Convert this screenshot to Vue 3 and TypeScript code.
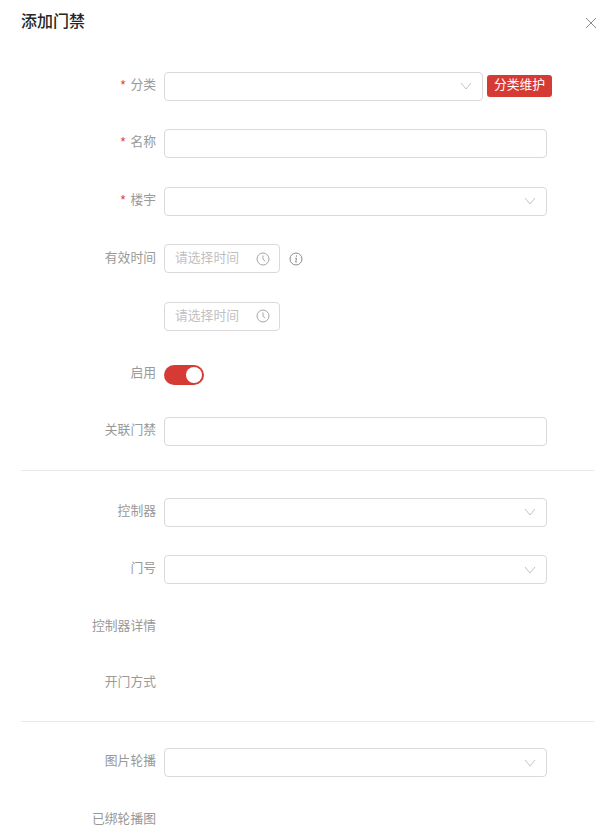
<script setup lang="ts">
const sections = [
  [
    { label: '分类', required: true, type: 'select', extra: true },
    { label: '名称', required: true, type: 'input' },
    { label: '楼宇', required: true, type: 'select' },
    { label: '有效时间', type: 'time', info: true },
    { label: '', type: 'time' },
    { label: '启用', type: 'switch' },
    { label: '关联门禁', type: 'input' },
  ],
  [
    { label: '控制器', type: 'select' },
    { label: '门号', type: 'select' },
    { label: '控制器详情', type: 'text' },
    { label: '开门方式', type: 'text' },
  ],
  [
    { label: '图片轮播', type: 'select' },
    { label: '已绑轮播图', type: 'text' },
  ],
]
</script>

<template>
  <div class="modal">
    <div class="header">
      <span class="title">添加门禁</span>
      <svg class="close" viewBox="0 0 12 12" width="12" height="12">
        <path d="M1 1l10 10M11 1L1 11" stroke="#8c8c8c" stroke-width="1" fill="none" />
      </svg>
    </div>
    <div class="body">
      <template v-for="(section, i) in sections" :key="i">
        <div v-if="i > 0" class="divider"></div>
        <div class="section">
          <div v-for="(item, j) in section" :key="j" class="row"
            :class="{ 'row-text': item.type === 'text', 'row-low': item.type === 'time' || item.type === 'switch' }">
            <label class="label"><span v-if="item.required" class="star">*</span>{{ item.label }}</label>
            <div v-if="item.type === 'select'" class="control select" :class="{ short: item.extra }">
              <svg viewBox="0 0 12 12" width="12" height="12">
                <path d="M1 3l5 6 5-6" stroke="#c4c4c4" stroke-width="1" fill="none" />
              </svg>
            </div>
            <div v-else-if="item.type === 'input'" class="control"></div>
            <div v-else-if="item.type === 'time'" class="control time">
              <span class="placeholder">请选择时间</span>
              <svg viewBox="0 0 14 14" width="14" height="14">
                <circle cx="7" cy="7" r="6" stroke="#a6a6a6" fill="none" />
                <path d="M7 3.5V7.3l2.2 1.7" stroke="#a6a6a6" fill="none" />
              </svg>
            </div>
            <div v-else-if="item.type === 'switch'" class="switch"><span class="knob"></span></div>
            <button v-if="item.extra" class="tag">分类维护</button>
            <svg v-if="item.info" class="info" viewBox="0 0 14 14" width="14" height="14">
              <circle cx="7" cy="7" r="6" stroke="#8c8c8c" fill="none" />
              <path d="M6.2 6.2h1.3L6.7 10.2h1.1M7.6 3.4l-.2 1.4" stroke="#8c8c8c" fill="none" />
            </svg>
          </div>
        </div>
      </template>
    </div>
  </div>
</template>

<style scoped>
.modal {
  width: 612px;
  height: 834px;
  overflow: hidden;
  background: #fff;
  font-family: "Liberation Sans", "Noto Sans CJK SC", sans-serif;
  font-size: 12.8px;
  color: #999;
}

.header {
  display: flex;
  align-items: center;
  justify-content: space-between;
  height: 46px;
  padding: 0 15px 0 21px;
}

.title {
  font-size: 16px;
  font-weight: 500;
  line-height: 20px;
  margin-bottom: 2px;
  color: #262626;
}

.body {
  padding: 25.9px 18px 0 21px;
}

.section {
  display: flex;
  flex-direction: column;
  gap: 28.5px;
}

.divider {
  height: 1px;
  background: #e8e8e8;
  margin: 24.2px 0 26.8px;
}

.row {
  display: flex;
  align-items: center;
  height: 29px;
}

.row-text {
  height: 27.5px;
}

.label {
  align-self: flex-start;
  width: 135px;
  margin-right: 8px;
  line-height: 26px;
  text-align: right;
  flex-shrink: 0;
}

.row-low .label {
  padding-top: 1px;
}

.star {
  color: #d9363e;
  margin-right: 5px;
}

.control {
  box-sizing: border-box;
  width: 383px;
  height: 29px;
  border: 1px solid #d9d9d9;
  border-radius: 4px;
  background: #fff;
}

.select {
  display: flex;
  align-items: center;
  justify-content: flex-end;
  padding-right: 10px;
}

.select.short {
  width: 319px;
}

.time {
  display: flex;
  align-items: center;
  justify-content: space-between;
  width: 116px;
  padding: 0 9px 0 11px;
}

.placeholder {
  margin-left: -1px;
  line-height: 24px;
  margin-bottom: 1px;
  color: #bfbfbf;
}

.switch {
  display: flex;
  align-items: center;
  justify-content: flex-end;
  width: 40px;
  height: 20px;
  margin-top: 2px;
  padding: 0 2px;
  box-sizing: border-box;
  border-radius: 10px;
  background: #d63a35;
}

.knob {
  width: 16px;
  height: 16px;
  border-radius: 50%;
  background: #fff;
}

.tag {
  width: 65px;
  height: 22px;
  margin-left: 4px;
  padding: 0 0 3px;
  border: 0;
  border-radius: 3px;
  background: #d63a35;
  color: #fff;
  font: inherit;
  line-height: 19px;
}

.info {
  margin-left: 9px;
}
</style>

<style>
html, body {
  background: #fff;
}
</style>
